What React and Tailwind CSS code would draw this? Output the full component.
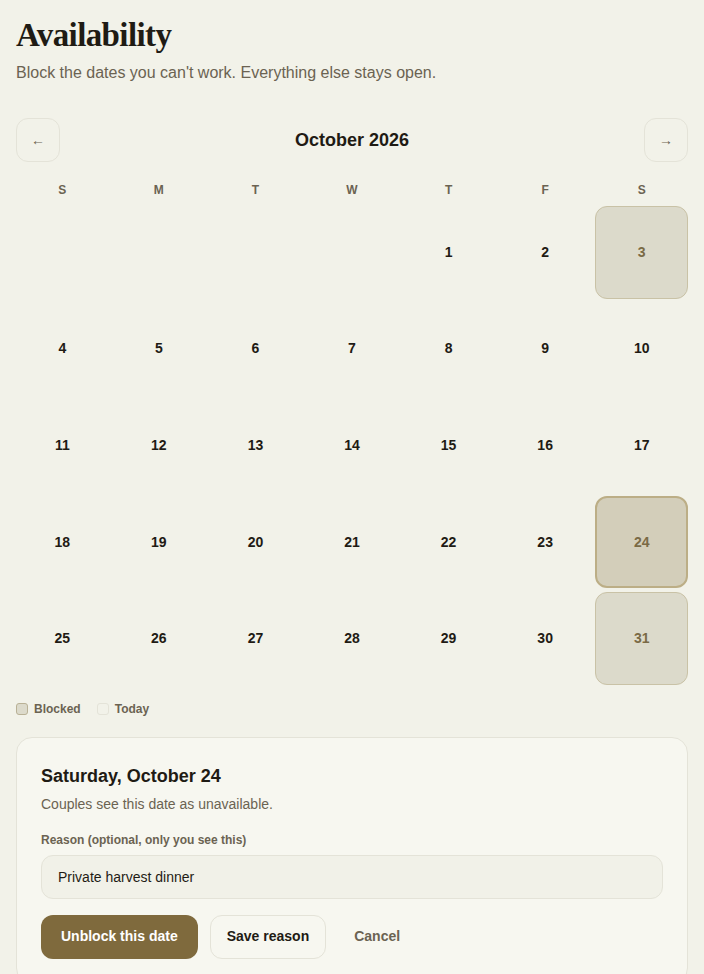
import React, { useState } from "react";

const WEEKDAYS = ["S", "M", "T", "W", "T", "F", "S"];
const BLOCKED = [3, 24, 31];

export default function App() {
  const [selected] = useState(24);
  const [reason, setReason] = useState("Private harvest dinner");

  // October 2026 starts on a Thursday
  const offset = 4;
  const cells = [];
  for (let i = 0; i < offset; i++) cells.push(null);
  for (let d = 1; d <= 31; d++) cells.push(d);

  return (
    <div className="min-h-screen bg-[#f2f2e9] px-4 pt-4 pb-10 font-['Liberation_Sans',Arial,sans-serif] text-[#1f1b14]">
      <h1 className="font-['Liberation_Serif',serif] text-[33px] font-bold leading-[38px] tracking-[-0.6px] text-[#1f1b14]">
        Availability
      </h1>
      <p className="mt-[9px] text-[16px] leading-5 text-[#6b6352]">
        Block the dates you can't work. Everything else stays open.
      </p>

      <div className="mt-[35px] flex items-center justify-between">
        <button className="flex h-11 w-11 items-center justify-center rounded-xl border border-[#e4e3d8] bg-[#f2f2e9] text-[14px] text-[#6b6352]">
          ←
        </button>
        <div className="text-[18px] font-bold">October 2026</div>
        <button className="flex h-11 w-11 items-center justify-center rounded-xl border border-[#e4e3d8] bg-[#f2f2e9] text-[14px] text-[#6b6352]">
          →
        </button>
      </div>

      <div className="mt-[21px] grid grid-cols-7 gap-1">
        {WEEKDAYS.map((w, i) => (
          <div key={i} className="pb-[9px] text-center text-[12px] font-bold leading-[14px] text-[#6b6352]">
            {w}
          </div>
        ))}
      </div>
      <div className="grid grid-cols-7 gap-1">
        {cells.map((d, i) => {
          if (d === null) return <div key={i} className="aspect-square" />;
          const blocked = BLOCKED.includes(d);
          const isSel = d === selected;
          return (
            <div
              key={i}
              className={`flex aspect-square items-center justify-center rounded-xl text-[14px] font-bold ${
                isSel
                  ? "border-2 border-[#bcae86] bg-[#d3ceba] text-[#7a6a45]"
                  : blocked
                  ? "border border-[#c9c2a6] bg-[#dcdacb] text-[#7a6a45]"
                  : "text-[#1f1b14]"
              }`}
            >
              {d}
            </div>
          );
        })}
      </div>

      <div className="mt-[15px] flex items-center gap-4 text-[12px] font-bold text-[#6b6352]">
        <div className="flex items-center gap-[6px]">
          <span className="h-3 w-3 rounded-[3px] border border-[#b9b196] bg-[#dcdacb]" />
          Blocked
        </div>
        <div className="flex items-center gap-[6px]">
          <span className="h-3 w-3 rounded-[3px] border border-[#e4e3d8] bg-[#f2f2e9]" />
          Today
        </div>
      </div>

      <div className="mt-[19px] rounded-2xl border border-[#e4e3d8] bg-[#f7f7f0] px-6 pt-[26px] pb-6">
        <h2 className="text-[18px] font-bold leading-6">Saturday, October 24</h2>
        <p className="mt-[6px] text-[14px] leading-5 text-[#6b6352]">Couples see this date as unavailable.</p>

        <label className="mt-[18px] block text-[12px] font-bold leading-4 text-[#6b6352]">
          Reason (optional, only you see this)
        </label>
        <input
          value={reason}
          onChange={(e) => setReason(e.target.value)}
          className="mt-[7px] h-11 w-full rounded-xl border border-[#e4e3d8] bg-[#f1f1e8] px-4 text-[14px] text-[#1f1b14] outline-none"
        />

        <div className="mt-4 flex items-center gap-3">
          <button className="h-11 rounded-xl bg-[#7f6a3d] px-5 text-[14px] font-bold text-white">
            Unblock this date
          </button>
          <button className="h-11 rounded-xl border border-[#e4e3d8] bg-[#f7f7f0] px-4 text-[14px] font-bold text-[#1f1b14]">
            Save reason
          </button>
          <button className="h-11 px-4 text-[14px] font-bold text-[#6b6352]">Cancel</button>
        </div>
      </div>
    </div>
  );
}
